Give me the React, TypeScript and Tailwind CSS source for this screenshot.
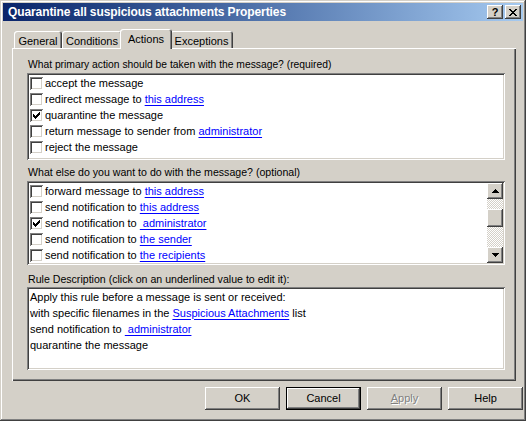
import React from "react";

const raised =
  "shadow-[inset_-1px_-1px_#404040,inset_1px_1px_#ffffff,inset_-2px_-2px_#808080,inset_2px_2px_#d4d0c8]";
const sunken =
  "shadow-[inset_1px_1px_#808080,inset_-1px_-1px_#ffffff,inset_2px_2px_#404040,inset_-2px_-2px_#d4d0c8]";

function Link({ children }: { children: React.ReactNode }) {
  return <span className="text-[#0000ff] underline underline-offset-[2px]">{children}</span>;
}

function CheckMark() {
  // classic 7x7 pixel tick
  const px = [
    [6, 0], [5, 1], [6, 1], [0, 2], [4, 2], [5, 2], [6, 2],
    [0, 3], [1, 3], [3, 3], [4, 3], [5, 3],
    [0, 4], [1, 4], [2, 4], [3, 4], [4, 4],
    [1, 5], [2, 5], [3, 5], [2, 6],
  ];
  return (
    <svg width="7" height="7" viewBox="0 0 7 7" shapeRendering="crispEdges">
      {px.map(([x, y]) => (
        <rect key={`${x}-${y}`} x={x} y={y} width="1" height="1" fill="#000" />
      ))}
    </svg>
  );
}

function Check({ checked }: { checked?: boolean }) {
  return (
    <span className={`w-[13px] h-[13px] bg-white shrink-0 flex items-center justify-center ${sunken}`}>
      {checked && <CheckMark />}
    </span>
  );
}

function Row({ checked, children }: { checked?: boolean; children: React.ReactNode }) {
  return (
    <div className="h-[16px] flex items-center gap-[2px] pl-[1px] whitespace-nowrap">
      <Check checked={checked} />
      <span className="leading-[14px]">{children}</span>
    </div>
  );
}

function Arrow({ up }: { up?: boolean }) {
  return (
    <svg width="7" height="4" viewBox="0 0 7 4" shapeRendering="crispEdges">
      <path d={up ? "M3 0h1v1h1v1h1v1h1v1H0V3h1V2h1V1h1z" : "M0 0h7v1H6v1H5v1H4v1H3V3H2V2H1V1H0z"} fill="#000" />
    </svg>
  );
}

function Tab({ label, w, selected }: { label: string; w: string; selected?: boolean }) {
  if (selected) {
    return (
      <div
        className={`${w} h-[20px] -mb-[1px] -mx-[2px] relative z-10 bg-[#d4d0c8] rounded-t-[3px] flex items-start justify-center pt-[2px] shadow-[inset_1px_1px_#ffffff,inset_-1px_0_#404040,inset_-2px_0_#808080]`}
      >
        {label}
      </div>
    );
  }
  return (
    <div
      className={`${w} h-[17px] rounded-t-[3px] flex items-start justify-center pt-[2px] shadow-[inset_1px_1px_#ffffff,inset_-1px_0_#404040,inset_-2px_0_#808080]`}
    >
      {label}
    </div>
  );
}

function Button({ label, variant }: { label: React.ReactNode; variant?: "default" | "disabled" }) {
  const frame =
    variant === "default"
      ? "shadow-[inset_0_0_0_1px_#000000,inset_-2px_-2px_#404040,inset_2px_2px_#ffffff,inset_-3px_-3px_#808080]"
      : raised;
  const text = variant === "disabled" ? "text-[#808080] [text-shadow:1px_1px_#ffffff]" : "text-black";
  return (
    <div className={`w-[75px] h-[23px] flex items-center justify-center ${frame} ${text}`}>{label}</div>
  );
}

export default function App() {
  return (
    <div
      className="w-[526px] h-[421px] bg-[#d4d0c8] p-[3px] flex flex-col text-[11px] text-black font-['Liberation_Sans',Arial,sans-serif] shadow-[inset_-1px_-1px_#404040,inset_1px_1px_#d4d0c8,inset_-2px_-2px_#808080,inset_2px_2px_#ffffff]"
    >
      {/* caption */}
      <div className="h-[18px] shrink-0 flex items-center justify-between bg-gradient-to-r from-[#0a246a] to-[#a6caf0] pl-[5px] pr-[2px]">
        <span className="text-white font-bold text-[12px] leading-[14px] tracking-[-0.1px]">
          Quarantine all suspicious attachments Properties
        </span>
        <div className="flex gap-[2px]">
          <div className={`w-[16px] h-[14px] bg-[#d4d0c8] flex items-center justify-center font-bold text-[11px] leading-none ${raised}`}>
            ?
          </div>
          <div className={`w-[16px] h-[14px] bg-[#d4d0c8] flex items-center justify-center ${raised}`}>
            <svg width="8" height="7" viewBox="0 0 8 7" shapeRendering="crispEdges">
              <path
                d="M0 0h2v1h1v1h2V1h1V0h2v1H7v1H6v1H5v1h1v1h1v1h1v1H6V6H5V5H3v1H2v1H0V6h1V5h1V4h1V3H2V2H1V1H0z"
                fill="#000"
              />
            </svg>
          </div>
        </div>
      </div>

      {/* tabs */}
      <div className="h-[19px] mt-[8px] ml-[9px] pl-[2px] flex items-end shrink-0">
        <Tab label="General" w="w-[48px]" />
        <Tab label="Conditions" w="w-[60px]" />
        <Tab label="Actions" w="w-[52px]" selected />
        <Tab label="Exceptions" w="w-[63px]" />
      </div>

      {/* panel */}
      <div className="ml-[9px] w-[504px] h-[333px] shrink-0 flex flex-col pl-[15px] pr-[11px] shadow-[inset_1px_1px_#ffffff,inset_-1px_-1px_#404040,inset_-2px_-2px_#808080]">
        <div className="h-[25px] pt-[10px] pl-[1px] leading-[14px] text-[10.3px] whitespace-nowrap">
          What primary action should be taken with the message? (required)
        </div>
        <div className={`h-[87px] bg-white p-[2px] ${sunken}`}>
          <Row>accept the message</Row>
          <Row>
            redirect message to <Link>this address</Link>
          </Row>
          <Row checked>quarantine the message</Row>
          <Row>
            return message to sender from <Link>administrator</Link>
          </Row>
          <Row>reject the message</Row>
        </div>

        <div className="h-[21px] pt-[5px] pl-[1px] leading-[14px] text-[10.6px] whitespace-nowrap">
          What else do you want to do with the message? (optional)
        </div>
        <div className={`h-[84px] bg-white p-[2px] flex ${sunken}`}>
          <div className="flex-1 overflow-hidden">
            <Row>
              forward message to <Link>this address</Link>
            </Row>
            <Row>
              send notification to <Link>this address</Link>
            </Row>
            <Row checked>
              send notification to <Link>&nbsp;administrator</Link>
            </Row>
            <Row>
              send notification to <Link>the sender</Link>
            </Row>
            <Row>
              send notification to <Link>the recipients</Link>
            </Row>
          </div>
          <div className="w-[16px] flex flex-col bg-[image:repeating-conic-gradient(#d4d0c8_0%_25%,#ffffff_0%_50%)] bg-size-[2px_2px]">
            <div className={`h-[16px] bg-[#d4d0c8] flex items-center justify-center ${raised}`}>
              <Arrow up />
            </div>
            <div className="h-[10px]" />
            <div className={`h-[18px] bg-[#d4d0c8] ${raised}`} />
            <div className="flex-1" />
            <div className={`h-[16px] bg-[#d4d0c8] flex items-center justify-center ${raised}`}>
              <Arrow />
            </div>
          </div>
        </div>

        <div className="h-[22px] pt-[7px] pl-[1px] leading-[14px] text-[10.6px] whitespace-nowrap">
          Rule Description (click on an underlined value to edit it):
        </div>
        <div className={`h-[83px] bg-white p-[2px] pl-[3px] ${sunken}`}>
          <div className="h-[16px] flex items-center whitespace-nowrap">
            Apply this rule before a message is sent or received:
          </div>
          <div className="h-[16px] flex items-center whitespace-nowrap">
            with specific filenames in the&nbsp;<Link>Suspicious Attachments</Link>&nbsp;list
          </div>
          <div className="h-[16px] flex items-center whitespace-nowrap">
            send notification to&nbsp;<Link>&nbsp;administrator</Link>
          </div>
          <div className="h-[16px] flex items-center whitespace-nowrap">quarantine the message</div>
        </div>
      </div>

      {/* buttons */}
      <div className="mt-[6px] flex justify-end gap-[6px]">
        <Button label="OK" />
        <Button label="Cancel" variant="default" />
        <Button
          label={
            <span>
              <span className="underline">A</span>pply
            </span>
          }
          variant="disabled"
        />
        <Button label="Help" />
      </div>
    </div>
  );
}
